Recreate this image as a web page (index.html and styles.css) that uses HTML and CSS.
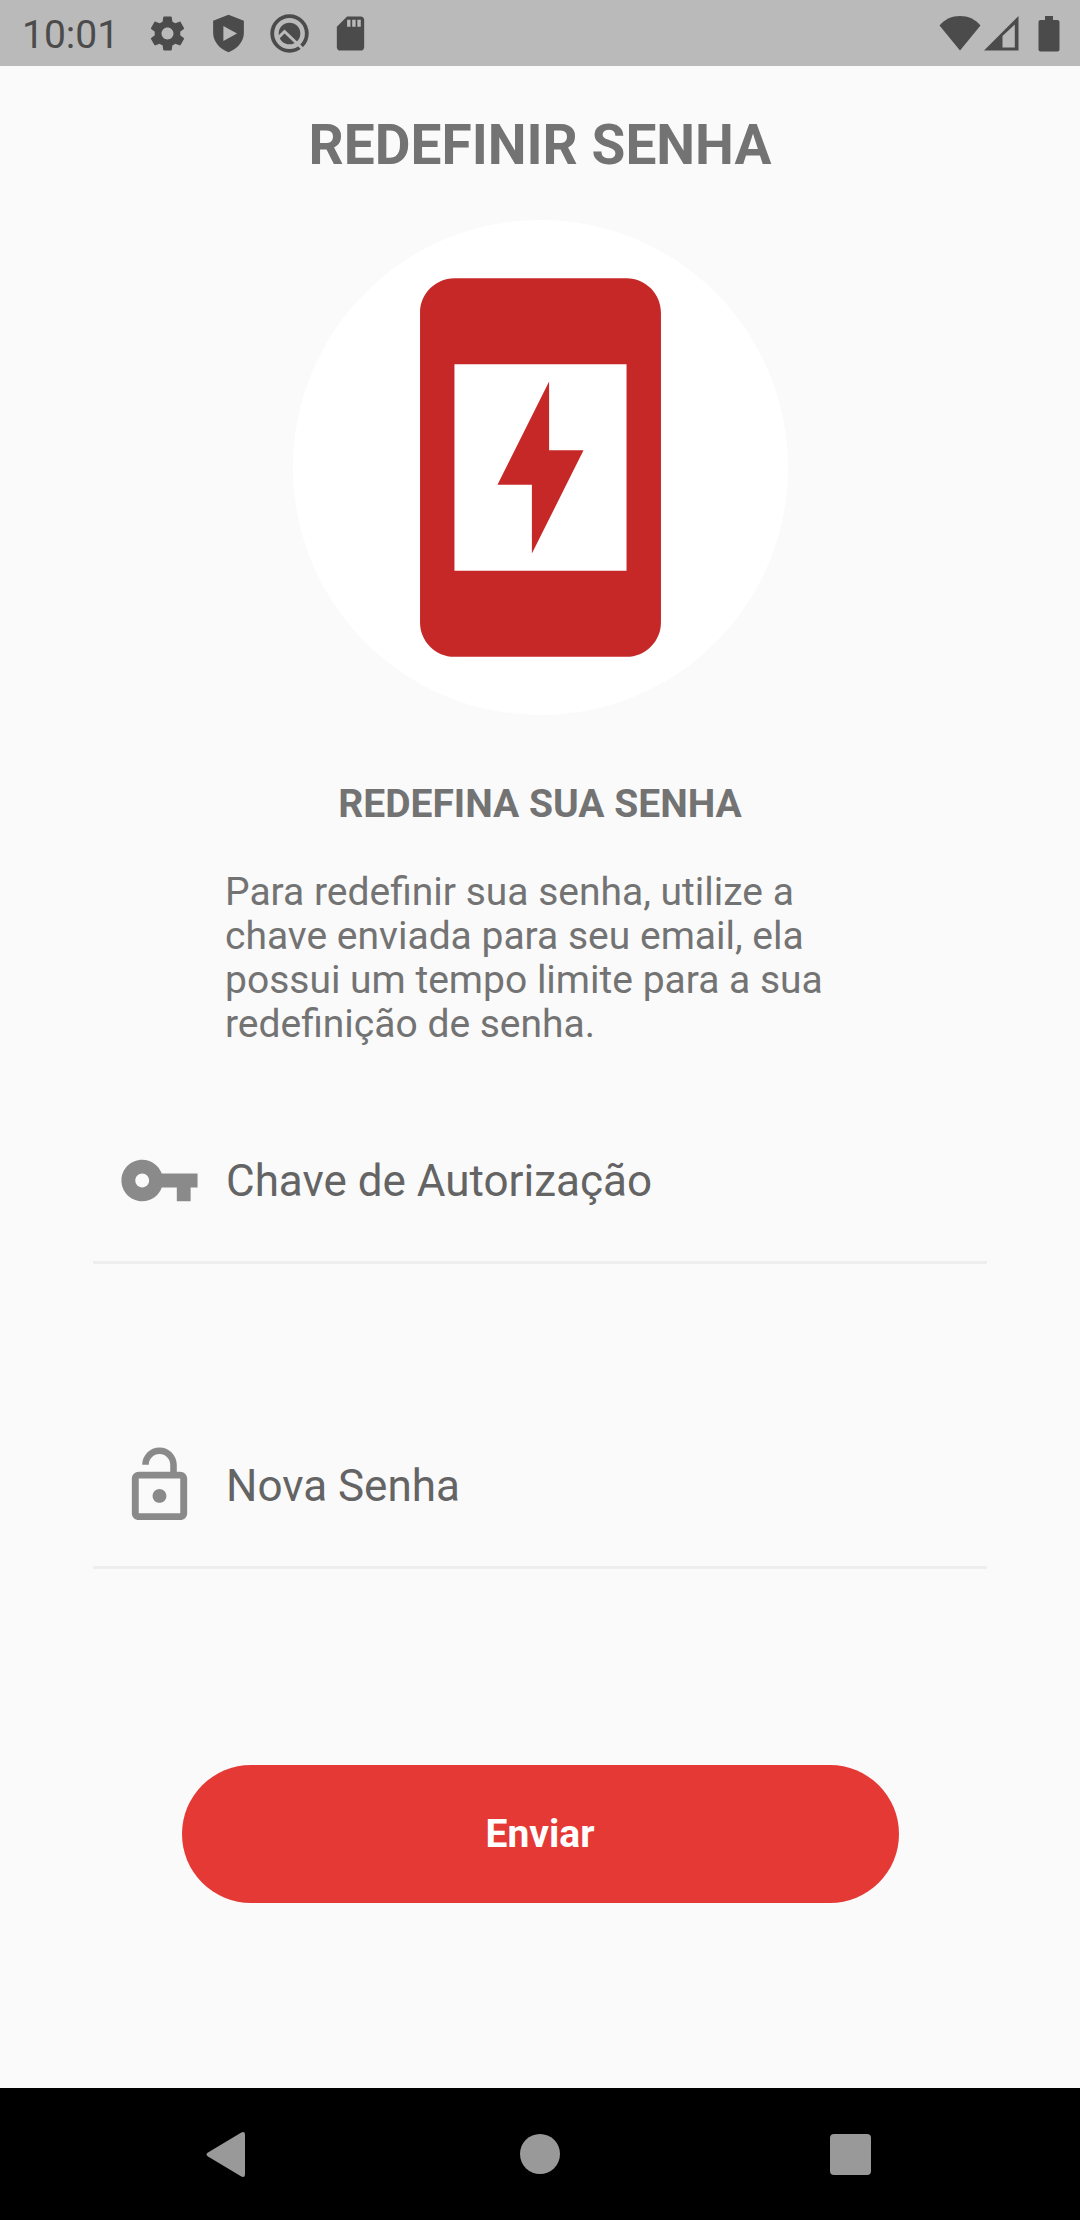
FILE: index.html
```html
<!DOCTYPE html>
<html lang="pt-BR">
<head>
<meta charset="utf-8">
<meta name="viewport" content="width=device-width, initial-scale=1">
<title>Redefinir senha</title>
<link rel="stylesheet" href="styles.css">
</head>
<body>
<header class="status">
  <span class="clock">10:01</span>
  <div class="notices">
    <svg class="status-icon" viewBox="0 0 24 24" aria-hidden="true"><path d="M19.43 12.98c.04-.32.07-.64.07-.98s-.03-.66-.07-.98l2.11-1.65c.19-.15.24-.42.12-.64l-2-3.46c-.12-.22-.39-.3-.61-.22l-2.49 1c-.52-.4-1.08-.73-1.69-.98l-.38-2.65C14.46 2.18 14.25 2 14 2h-4c-.25 0-.46.18-.49.42l-.38 2.65c-.61.25-1.17.59-1.69.98l-2.49-1c-.23-.09-.49 0-.61.22l-2 3.46c-.13.22-.07.49.12.64l2.11 1.65c-.04.32-.07.65-.07.98s.03.66.07.98l-2.11 1.65c-.19.15-.24.42-.12.64l2 3.46c.12.22.39.3.61.22l2.49-1c.52.4 1.08.73 1.69.98l.38 2.65c.03.24.24.42.49.42h4c.25 0 .46-.18.49-.42l.38-2.65c.61-.25 1.17-.59 1.69-.98l2.49 1c.23.09.49 0 .61-.22l2-3.46c.12-.22.07-.49-.12-.64l-2.11-1.65zM12 15.5c-1.930 0-3.500-1.570-3.500-3.500s1.570-3.500 3.500-3.500 3.500 1.570 3.500 3.500-1.570 3.500-3.500 3.500z"/></svg>
    <svg class="status-icon" viewBox="0 0 24 24" aria-hidden="true"><path fill-rule="evenodd" d="M12 1L3 4.600v7c0 5 3.800 9.600 9 11.400 5.200-1.800 9-6.400 9-11.400v-7zM9 7.600L17 12l-8 4.400z"/></svg>
    <svg class="status-icon" viewBox="0 0 41 41" aria-hidden="true"><circle cx="20.500" cy="20.500" r="17.300" fill="none" stroke="currentColor" stroke-width="3.800"/><circle cx="20.500" cy="20.500" r="10.800"/><path class="status-cut" d="M8 26l7.500-7.500L36 38"/></svg>
    <svg class="status-icon" viewBox="0 0 24 24" aria-hidden="true"><path d="M18 2h-8L4 8v12c0 1.100.9 2 2 2h12c1.100 0 2-.9 2-2V4c0-1.100-.9-2-2-2zm-6 6h-2V4h2v4zm3 0h-2V4h2v4zm3 0h-2V4h2v4z"/></svg>
  </div>
  <div class="signals">
    <svg class="signal-wifi" viewBox="0 0 42 36" aria-hidden="true"><path d="M21 35.500L.5 10.500C6 4 13 1 21 1s15 3 20.500 9.500z"/></svg>
    <svg class="signal-cell" viewBox="0 0 36 36" aria-hidden="true"><path fill-rule="evenodd" d="M1 35.500L35.500 1v34.500zM19.500 21v11.500h12.300V9.500z"/></svg>
    <svg class="signal-battery" viewBox="0 0 22 37" aria-hidden="true"><path d="M7 1h8v4h4.500Q21.500 5 21.500 7v27.500q0 2-2 2h-17q-2 0-2-2V7q0-2 2-2H7z"/></svg>
  </div>
</header>

<main class="screen">
  <h1 class="title">REDEFINIR SENHA</h1>
  <div class="badge">
    <svg class="badge-icon" viewBox="0 0 24 24" aria-hidden="true"><path d="M14.500 11l-3 6v-4h-2l3-6v4zM17 1H7c-1.100 0-2 .9-2 2v18c0 1.100.9 2 2 2h10c1.100 0 2-.9 2-2V3c0-1.100-.9-2-2-2zm0 17H7V6h10z"/></svg>
  </div>
  <h2 class="subtitle">REDEFINA SUA SENHA</h2>
  <p class="intro">Para redefinir sua senha, utilize a chave enviada para seu email, ela possui um tempo limite para a sua redefinição de senha.</p>
  <form class="form">
    <div class="field">
      <label class="field-label" for="key"><svg class="field-icon" viewBox="0 0 24 24" role="img" aria-label="Chave de Autorização"><path d="M12.650 10C11.830 7.670 9.610 6 7 6c-3.310 0-6 2.690-6 6s2.690 6 6 6c2.610 0 4.830-1.670 5.650-4H17v4h4v-4h2v-4H12.650zM7 14c-1.100 0-2-.9-2-2s.9-2 2-2 2 .9 2 2-.9 2-2 2z"/></svg></label>
      <input class="field-input" id="key" type="text" placeholder="Chave de Autorização">
    </div>
    <div class="field">
      <label class="field-label" for="password"><svg class="field-icon" viewBox="0 0 24 24" role="img" aria-label="Nova Senha"><path d="M12 17c1.100 0 2-.9 2-2s-.9-2-2-2-2 .9-2 2 .9 2 2 2zm6-9h-1V6c0-2.760-2.240-5-5-5S7 3.240 7 6h1.900c0-1.710 1.390-3.100 3.100-3.100s3.100 1.390 3.100 3.100v2H6c-1.100 0-2 .9-2 2v10c0 1.100.9 2 2 2h12c1.100 0 2-.9 2-2V10c0-1.100-.9-2-2-2zm0 12H6V10h12v10z"/></svg></label>
      <input class="field-input" id="password" type="password" placeholder="Nova Senha">
    </div>
    <button class="submit" type="submit">Enviar</button>
  </form>
</main>

<nav class="navbar" aria-label="Sistema">
  <button class="nav-button" type="button" aria-label="Voltar"><svg class="nav-icon" viewBox="0 0 66 66"><path d="M44.500 12Q49 9.500 49 14v39q0 4.500-4.500 2L12 35.500q-3-2 0-4z"/></svg></button>
  <button class="nav-button" type="button" aria-label="Início"><svg class="nav-icon" viewBox="0 0 66 66"><circle cx="33" cy="33" r="20"/></svg></button>
  <button class="nav-button" type="button" aria-label="Recentes"><svg class="nav-icon" viewBox="0 0 66 66"><rect x="12" y="13" width="41" height="41" rx="4"/></svg></button>
</nav>
</body>
</html>
```
FILE: styles.css
```css
* {
  box-sizing: border-box;
}

body {
  margin: 0;
  min-height: 100vh;
  display: flex;
  flex-direction: column;
  background: #fafafa;
  color: #737373;
  font-family: Roboto, "Liberation Sans", sans-serif;
}

svg {
  display: block;
  fill: currentColor;
}

.status {
  display: flex;
  align-items: center;
  height: 66px;
  padding: 0 20px 0 22px;
  background: #bababa;
  color: #4b4b4b;
}

.clock {
  padding-top: 3px;
  font-size: 39px;
  line-height: 46px;
}

.notices {
  display: flex;
  gap: 20px;
  margin-left: 28px;
}

.status-icon {
  width: 41px;
  height: 41px;
}

.status-cut {
  fill: none;
  stroke: #bababa;
  stroke-width: 3;
}

.signals {
  display: flex;
  align-items: center;
  margin-left: auto;
}

.signal-wifi {
  width: 42px;
  height: 36px;
}

.signal-cell {
  width: 36px;
  height: 36px;
  margin-left: 2px;
}

.signal-battery {
  width: 22px;
  height: 37px;
  margin-left: 19px;
}

.screen {
  flex: 1;
  display: flex;
  flex-direction: column;
  align-items: center;
  padding: 47px 93px 64px;
}

.title {
  margin: 0;
  font-size: 55px;
  line-height: 64px;
  font-weight: 700;
}

.badge {
  display: flex;
  align-items: center;
  justify-content: center;
  width: 495px;
  height: 495px;
  margin-top: 43px;
  border-radius: 50%;
  background: #fff;
  color: #c62828;
}

.badge-icon {
  width: 413px;
  height: 413px;
}

.subtitle {
  margin: 67px 0 0;
  font-size: 39px;
  line-height: 44px;
  font-weight: 700;
}

.intro {
  max-width: 630px;
  margin: 44px 0 0;
  font-size: 39px;
  line-height: 44px;
}

.form {
  display: flex;
  flex-direction: column;
  align-items: center;
  width: 100%;
  margin-top: 54px;
}

.field {
  display: flex;
  align-items: center;
  gap: 25px;
  width: 100%;
  height: 164px;
  padding: 0 25px;
  border-bottom: 3px solid #eee;
}

.field + .field {
  margin-top: 141px;
}

.field-label {
  color: #8a8a8a;
}

.field-icon {
  width: 83px;
  height: 83px;
}

.field-input {
  flex: 1;
  min-width: 0;
  padding: 0;
  border: 0;
  outline: 0;
  background: transparent;
  color: #646464;
  font: inherit;
  font-size: 44px;
  line-height: 52px;
}

.field-input::placeholder {
  color: #646464;
  opacity: 1;
}

.submit {
  width: 100%;
  max-width: 717px;
  height: 138px;
  margin-top: 196px;
  border: 0;
  border-radius: 69px;
  background: #e53935;
  color: #fff;
  font: inherit;
  font-size: 39px;
  font-weight: 700;
}

.navbar {
  display: flex;
  align-items: center;
  justify-content: space-between;
  height: 132px;
  padding: 0 196px;
  background: #000;
  color: #999;
}

.nav-button {
  padding: 0;
  border: 0;
  background: transparent;
  color: inherit;
}

.nav-icon {
  width: 66px;
  height: 66px;
}
```
